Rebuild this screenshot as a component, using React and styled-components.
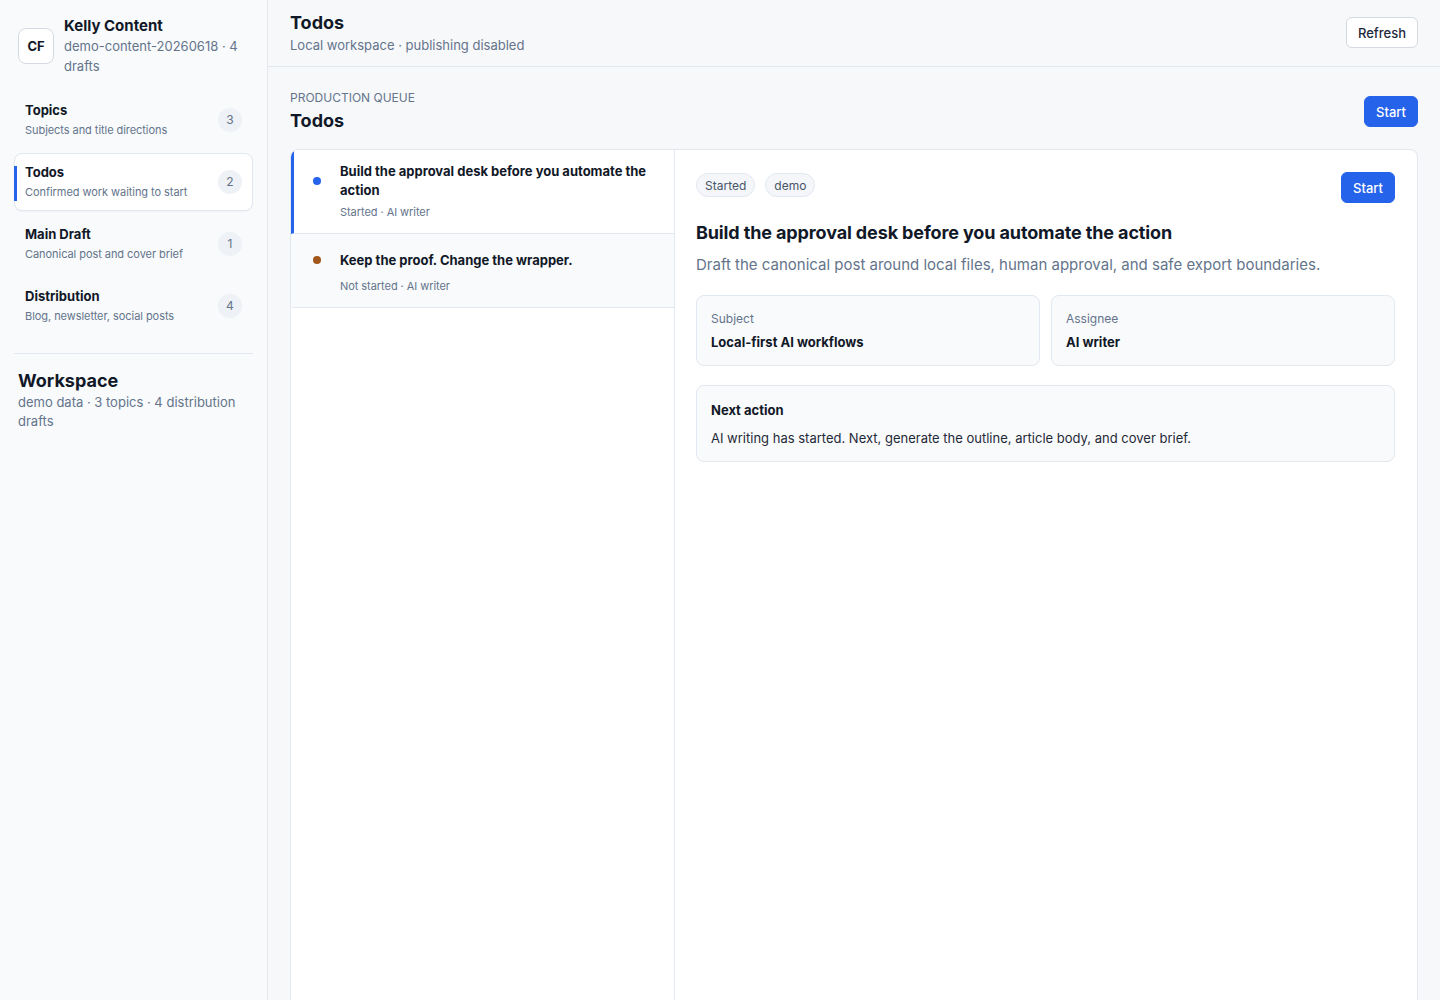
import React, { useState } from 'react';
import styled, { createGlobalStyle } from 'styled-components';

const GlobalStyle = createGlobalStyle`
  * { box-sizing: border-box; }
  body {
    margin: 0;
    font-family: Inter, "Noto Sans", sans-serif;
    color: #111827;
    background: #f7f8fa;
  }
`

const Shell = styled.div`
  display: flex;
  min-height: 100vh;
`

const Sidebar = styled.aside`
  width: 268px;
  flex-shrink: 0;
  background: #f8fafc;
  border-right: 1px solid #e5e7eb;
  padding: 16px 14px;
`

const Brand = styled.div`
  display: flex;
  align-items: center;
  gap: 10px;
  padding: 0 4px;
`

const Avatar = styled.div`
  width: 36px;
  height: 36px;
  flex-shrink: 0;
  border: 1px solid #d5dae1;
  border-radius: 8px;
  background: #fff;
  display: flex;
  align-items: center;
  justify-content: center;
  font-size: 13px;
  font-weight: 700;
  color: #111827;
`

const BrandName = styled.div`
  font-size: 15px;
  line-height: 20px;
  font-weight: 700;
  color: #111827;
`

const BrandMeta = styled.div`
  font-size: 13px;
  line-height: 20px;
  color: #64748b;
`

const Nav = styled.nav`
  display: flex;
  flex-direction: column;
  gap: 4px;
  margin-top: 15px;
`

const NavItem = styled.div`
  position: relative;
  display: flex;
  align-items: center;
  justify-content: space-between;
  padding: 9px 10px 10px;
  border-radius: 8px;
  border: 1px solid ${p => (p.$active ? '#e2e8f0' : 'transparent')};
  background: ${p => (p.$active ? '#fff' : 'transparent')};
  box-shadow: ${p => (p.$active ? '0 1px 2px rgba(15,23,42,0.04)' : 'none')};
  cursor: pointer;
  &::before {
    content: '';
    display: ${p => (p.$active ? 'block' : 'none')};
    position: absolute;
    left: -1px;
    top: 12px;
    bottom: 9px;
    width: 3px;
    background: #2563eb;
  }
`

const NavTitle = styled.div`
  font-size: 13px;
  line-height: 18px;
  font-weight: 700;
  color: #111827;
`

const NavSub = styled.div`
  margin-top: 3px;
  font-size: 11px;
  line-height: 16px;
  letter-spacing: -0.005em;
  color: #64748b;
`

const Count = styled.span`
  width: 24px;
  height: 24px;
  border-radius: 50%;
  background: #eef1f5;
  color: #64748b;
  font-size: 12px;
  display: flex;
  align-items: center;
  justify-content: center;
`

const Divider = styled.hr`
  margin: 18px 0 15px;
  border: 0;
  border-top: 1px solid #e2e8f0;
`

const Workspace = styled.div`
  padding: 0 4px;
`

const WorkspaceTitle = styled.div`
  font-size: 18px;
  line-height: 24px;
  font-weight: 700;
  color: #111827;
`

const WorkspaceMeta = styled.div`
  font-size: 13px;
  line-height: 19px;
  color: #64748b;
`

const Main = styled.main`
  flex: 1;
  display: flex;
  flex-direction: column;
  min-width: 0;
`

const TopBar = styled.header`
  display: flex;
  align-items: center;
  justify-content: space-between;
  padding: 11px 22px 12px;
  border-bottom: 1px solid #e2e8f0;
`

const PageTitle = styled.h1`
  margin: 0;
  font-size: 18px;
  line-height: 24px;
  font-weight: 700;
  color: #111827;
`

const PageSub = styled.div`
  margin-top: 1px;
  font-size: 13px;
  line-height: 18px;
  color: #64748b;
`

const Button = styled.button`
  height: 31px;
  padding: 0 11px;
  border-radius: 6px;
  font-family: inherit;
  font-size: 13px;
  font-weight: 500;
  cursor: pointer;
  border: 1px solid ${p => (p.$primary ? '#2563eb' : '#d5dae1')};
  background: ${p => (p.$primary ? '#2563eb' : '#fff')};
  color: ${p => (p.$primary ? '#fff' : '#1e293b')};
`

const Content = styled.section`
  flex: 1;
  padding: 23px 22px 0;
  display: flex;
  flex-direction: column;
`

const SectionHead = styled.div`
  display: flex;
  align-items: center;
  justify-content: space-between;
`

const Eyebrow = styled.div`
  font-size: 12px;
  line-height: 16px;
  text-transform: uppercase;
  color: #64748b;
`

const SectionTitle = styled.h2`
  margin: 3px 0 0;
  font-size: 18px;
  line-height: 24px;
  font-weight: 700;
  color: #111827;
`

const Panel = styled.div`
  margin-top: 16px;
  min-height: 880px;
  display: grid;
  grid-template-columns: 384px 1fr;
  background: #fff;
  border: 1px solid #e2e8f0;
  border-radius: 8px 8px 0 0;
  overflow: hidden;
`

const List = styled.div`
  border-right: 1px solid #e2e8f0;
`

const Row = styled.div`
  padding: 12px 20px 13px 19px;
  border-bottom: 1px solid #e2e8f0;
  border-left: 3px solid ${p => (p.$active ? '#2563eb' : 'transparent')};
  background: ${p => (p.$active ? '#fff' : '#f8fafc')};
  cursor: pointer;
`

const RowHead = styled.div`
  display: flex;
  align-items: center;
  gap: 19px;
  min-height: 28px;
`

const Dot = styled.span`
  width: 8px;
  height: 8px;
  flex-shrink: 0;
  border-radius: 50%;
  background: ${p => p.$color};
`

const RowTitle = styled.div`
  font-size: 13px;
  line-height: 19px;
  font-weight: 700;
  color: #111827;
`

const RowMeta = styled.div`
  margin-top: 4px;
  padding-left: 27px;
  font-size: 11px;
  line-height: 16px;
  letter-spacing: -0.005em;
  color: #64748b;
`

const Detail = styled.div`
  padding: 22px 22px 22px 21px;
`

const DetailHead = styled.div`
  display: flex;
  align-items: flex-start;
  justify-content: space-between;
`

const Tags = styled.div`
  display: flex;
  gap: 10px;
  margin-top: 1px;
`

const Tag = styled.span`
  height: 24px;
  padding: 0 8px;
  display: inline-flex;
  align-items: center;
  border-radius: 999px;
  border: 1px solid #e2e8f0;
  background: #f4f6f9;
  font-size: 12px;
  color: #475569;
`

const DetailTitle = styled.h3`
  margin: 18px 0 0;
  font-size: 18px;
  line-height: 24px;
  font-weight: 700;
  letter-spacing: -0.007em;
  color: #111827;
`

const DetailDesc = styled.p`
  margin: 9px 0 0;
  font-size: 15px;
  line-height: 22px;
  color: #64748b;
`

const Fields = styled.div`
  margin-top: 19px;
  display: grid;
  grid-template-columns: 1fr 1fr;
  gap: 11px;
`

const Card = styled.div`
  border: 1px solid #e2e8f0;
  border-radius: 8px;
  background: #f9fafc;
  padding: ${p => (p.$tall ? '15px 14px 14px' : '14px 14px 14px')};
  margin-top: ${p => (p.$gap ? '19px' : '0')};
`

const FieldLabel = styled.div`
  font-size: 12px;
  line-height: 17px;
  color: #64748b;
`

const FieldValue = styled.div`
  margin-top: 6px;
  font-size: 13px;
  line-height: 18px;
  font-weight: 700;
  color: #111827;
`

const CardTitle = styled.div`
  font-size: 13px;
  line-height: 18px;
  font-weight: 700;
  color: #111827;
`

const CardText = styled.div`
  margin-top: 10px;
  font-size: 13px;
  line-height: 18px;
  color: #1f2937;
`

const navItems = [
  { id: 'topics', title: 'Topics', sub: 'Subjects and title directions', count: 3 },
  { id: 'todos', title: 'Todos', sub: 'Confirmed work waiting to start', count: 2 },
  { id: 'draft', title: 'Main Draft', sub: 'Canonical post and cover brief', count: 1 },
  { id: 'dist', title: 'Distribution', sub: 'Blog, newsletter, social posts', count: 4 },
]

const todos = [
  { id: 1, title: 'Build the approval desk before you automate the action', meta: 'Started · AI writer', color: '#2563eb' },
  { id: 2, title: 'Keep the proof. Change the wrapper.', meta: 'Not started · AI writer', color: '#a0561b' },
]

export default function App() {
  const [section, setSection] = useState('todos');
  const [selected, setSelected] = useState(1);

  return (
    <>
      <GlobalStyle />
      <Shell>
        <Sidebar>
          <Brand>
            <Avatar>CF</Avatar>
            <div>
              <BrandName>Kelly Content</BrandName>
              <BrandMeta>demo-content-20260618 · 4 drafts</BrandMeta>
            </div>
          </Brand>
          <Nav>
            {navItems.map(item => (
              <NavItem key={item.id} $active={section === item.id} onClick={() => setSection(item.id)}>
                <div>
                  <NavTitle>{item.title}</NavTitle>
                  <NavSub>{item.sub}</NavSub>
                </div>
                <Count>{item.count}</Count>
              </NavItem>
            ))}
          </Nav>
          <Divider />
          <Workspace>
            <WorkspaceTitle>Workspace</WorkspaceTitle>
            <WorkspaceMeta>demo data · 3 topics · 4 distribution drafts</WorkspaceMeta>
          </Workspace>
        </Sidebar>

        <Main>
          <TopBar>
            <div>
              <PageTitle>Todos</PageTitle>
              <PageSub>Local workspace · publishing disabled</PageSub>
            </div>
            <Button>Refresh</Button>
          </TopBar>
          <Content>
            <SectionHead>
              <div>
                <Eyebrow>Production queue</Eyebrow>
                <SectionTitle>Todos</SectionTitle>
              </div>
              <Button $primary>Start</Button>
            </SectionHead>
            <Panel>
              <List>
                {todos.map(t => (
                  <Row key={t.id} $active={selected === t.id} onClick={() => setSelected(t.id)}>
                    <RowHead>
                      <Dot $color={t.color} />
                      <RowTitle>{t.title}</RowTitle>
                    </RowHead>
                    <RowMeta>{t.meta}</RowMeta>
                  </Row>
                ))}
              </List>
              <Detail>
                <DetailHead>
                  <Tags>
                    <Tag>Started</Tag>
                    <Tag>demo</Tag>
                  </Tags>
                  <Button $primary>Start</Button>
                </DetailHead>
                <DetailTitle>Build the approval desk before you automate the action</DetailTitle>
                <DetailDesc>Draft the canonical post around local files, human approval, and safe export boundaries.</DetailDesc>
                <Fields>
                  <Card>
                    <FieldLabel>Subject</FieldLabel>
                    <FieldValue>Local-first AI workflows</FieldValue>
                  </Card>
                  <Card>
                    <FieldLabel>Assignee</FieldLabel>
                    <FieldValue>AI writer</FieldValue>
                  </Card>
                </Fields>
                <Card $gap $tall>
                  <CardTitle>Next action</CardTitle>
                  <CardText>AI writing has started. Next, generate the outline, article body, and cover brief.</CardText>
                </Card>
              </Detail>
            </Panel>
          </Content>
        </Main>
      </Shell>
    </>
  )
}
